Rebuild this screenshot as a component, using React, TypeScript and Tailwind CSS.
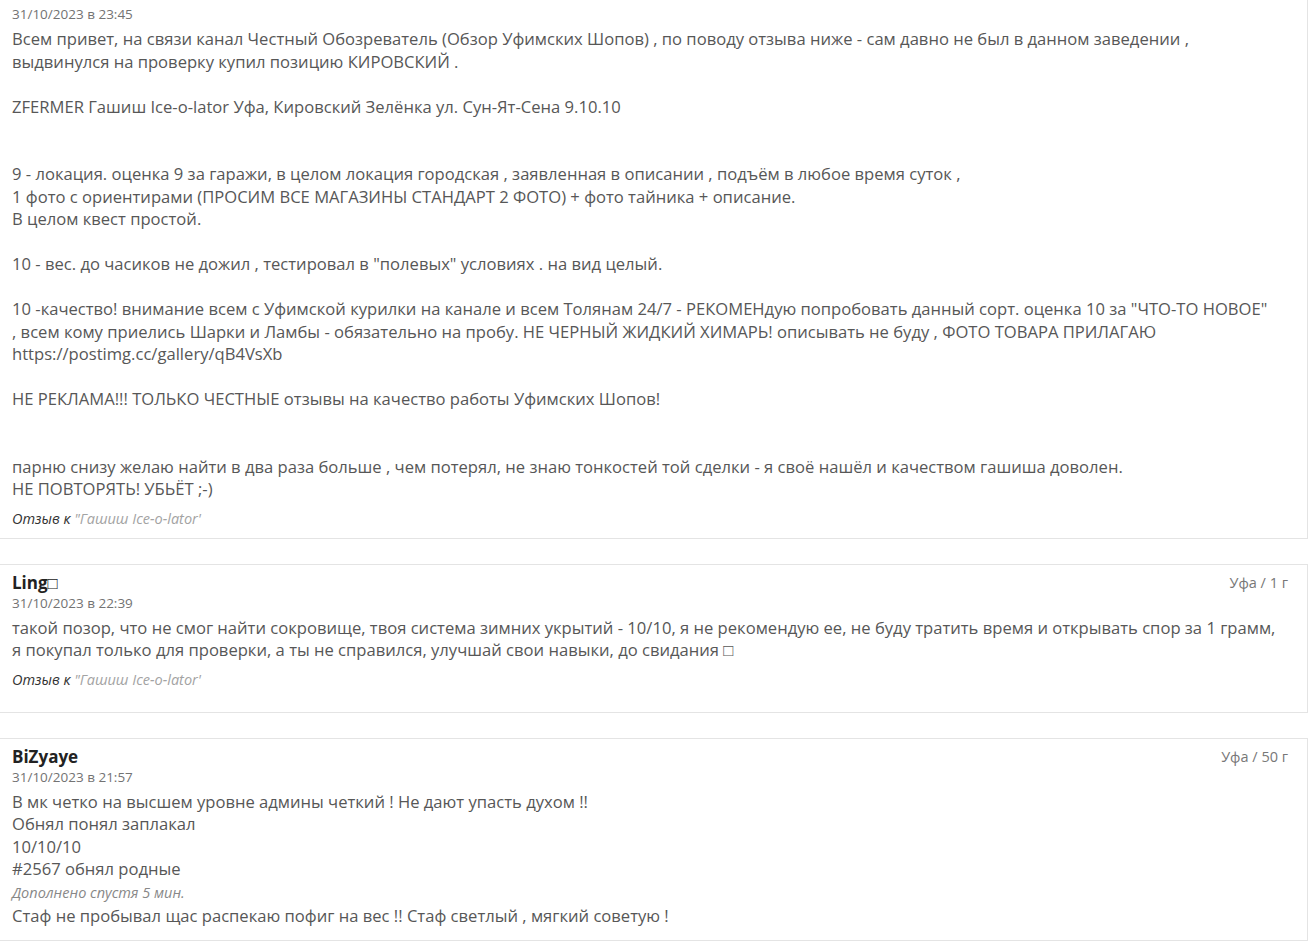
import React from 'react';

type Review = {
  name?: string;
  date: string;
  place?: string;
  lines: string[];
  addedNote?: string;
  addedLines?: string[];
  product?: string;
  bottomPad: string;
  topBorder: boolean;
};

const reviews: Review[] = [
  {
    date: '31/10/2023 в 23:45',
    lines: [
      'Всем привет, на связи канал Честный Обозреватель (Обзор Уфимских Шопов) , по поводу отзыва ниже - сам давно не был в данном заведении ,',
      'выдвинулся на проверку купил позицию КИРОВСКИЙ .',
      '',
      'ZFERMER Гашиш Ice-o-lator Уфа, Кировский Зелёнка ул. Сун-Ят-Сена 9.10.10',
      '',
      '',
      '9 - локация. оценка 9 за гаражи, в целом локация городская , заявленная в описании , подъём в любое время суток ,',
      '1 фото с ориентирами (ПРОСИМ ВСЕ МАГАЗИНЫ СТАНДАРТ 2 ФОТО) + фото тайника + описание.',
      'В целом квест простой.',
      '',
      '10 - вес. до часиков не дожил , тестировал в "полевых" условиях . на вид целый.',
      '',
      '10 -качество! внимание всем с Уфимской курилки на канале и всем Толянам 24/7 - РЕКОМЕНдую попробовать данный сорт. оценка 10 за "ЧТО-ТО НОВОЕ"',
      ', всем кому приелись Шарки и Ламбы - обязательно на пробу. НЕ ЧЕРНЫЙ ЖИДКИЙ ХИМАРЬ! описывать не буду , ФОТО ТОВАРА ПРИЛАГАЮ',
      'https://postimg.cc/gallery/qB4VsXb',
      '',
      'НЕ РЕКЛАМА!!! ТОЛЬКО ЧЕСТНЫЕ отзывы на качество работы Уфимских Шопов!',
      '',
      '',
      'парню снизу желаю найти в два раза больше , чем потерял, не знаю тонкостей той сделки - я своё нашёл и качеством гашиша доволен.',
      'НЕ ПОВТОРЯТЬ! УБЬЁТ ;-)',
    ],
    product: 'Гашиш Ice-o-lator',
    bottomPad: 'pb-[9px]',
    topBorder: false,
  },
  {
    name: 'Ling\u25A1',
    date: '31/10/2023 в 22:39',
    place: 'Уфа / 1 г',
    lines: [
      'такой позор, что не смог найти сокровище, твоя система зимних укрытий - 10/10, я не рекомендую ее, не буду тратить время и открывать спор за 1 грамм,',
      'я покупал только для проверки, а ты не справился, улучшай свои навыки, до свидания \u25A1',
    ],
    product: 'Гашиш Ice-o-lator',
    bottomPad: 'pb-[22px]',
    topBorder: true,
  },
  {
    name: 'BiZyaye',
    date: '31/10/2023 в 21:57',
    place: 'Уфа / 50 г',
    lines: [
      'В мк четко на высшем уровне админы четкий ! Не дают упасть духом !!',
      'Обнял понял заплакал',
      '10/10/10',
      '#2567 обнял родные',
    ],
    addedNote: 'Дополнено спустя 5 мин.',
    addedLines: ['Стаф не пробывал щас распекаю пофиг на вес !! Стаф светлый , мягкий советую !'],
    bottomPad: 'pb-[12px]',
    topBorder: true,
  },
];

function ReviewCard({ review }: { review: Review }) {
  return (
    <div
      className={`-ml-px w-[1309px] bg-white border-[#e4e4e4] border-x border-b px-[12px] ${
        review.topBorder ? 'border-t pt-[8px]' : 'pt-[4px]'
      } ${review.bottomPad}`}
    >
      {review.name && (
        <div className="flex items-center justify-between h-[20px]">
          <span className="text-[17px] font-bold text-[#222]">{review.name}</span>
          <span className="text-[14.5px] text-[#777] pr-[7px]">{review.place}</span>
        </div>
      )}
      <div className="text-[13.5px] leading-[21px] text-[#737373]">{review.date}</div>
      <div className="mt-[3px] text-[16.6px] leading-[22.5px] text-[#575757]">
        {review.lines.map((line, i) => (
          <div key={i} className="whitespace-nowrap h-[22.5px]">
            {line}
          </div>
        ))}
      </div>
      {review.addedNote && (
        <>
          <div className="mt-[1px] text-[14.5px] leading-[22px] italic text-[#888]">{review.addedNote}</div>
          {review.addedLines?.map((line, i) => (
            <div key={i} className="whitespace-nowrap text-[16.6px] leading-[24px] text-[#575757]">
              {line}
            </div>
          ))}
        </>
      )}
      {review.product && (
        <div className="mt-[8px] text-[14.5px] leading-[20px] italic text-[#333]">
          Отзыв к <span className="text-[#a3a3a3]">"{review.product}'</span>
        </div>
      )}
    </div>
  );
}

export default function App() {
  return (
    <div
      className="min-h-[943px] bg-white overflow-hidden"
      style={{ fontFamily: '"Open Sans", "Noto Sans", sans-serif' }}
    >
      <div className="flex flex-col gap-[25px]">
        {reviews.map((r, i) => (
          <ReviewCard key={i} review={r} />
        ))}
      </div>
    </div>
  );
}
